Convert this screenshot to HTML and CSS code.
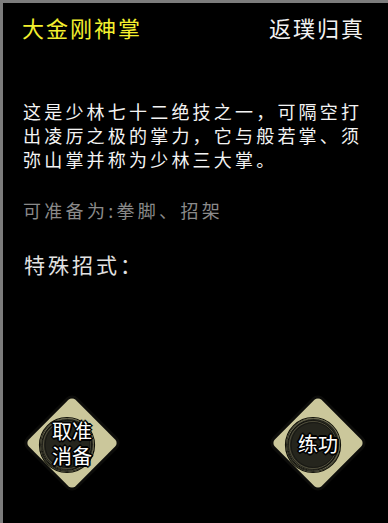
FILE: index.html
```html
<!DOCTYPE html>
<html lang="zh">
<head>
<meta charset="utf-8">
<link rel="stylesheet" href="styles.css">
</head>
<body>
<div class="panel">
  <header class="head">
    <div class="title">大金刚神掌</div>
    <div class="level">返璞归真</div>
  </header>
  <p class="desc">这是少林七十二绝技之一，可隔空打出凌厉之极的掌力，它与般若掌、须弥山掌并称为少林三大掌。</p>
  <p class="prep">可准备为:拳脚、招架</p>
  <p class="special">特殊招式：</p>
  <footer class="actions">
    <div class="btn">
      <div class="diamond"></div>
      <svg class="ring" width="60" height="60" viewBox="0 0 60 60">
        <circle cx="30" cy="30" r="27" fill="#25251d"/>
        <circle cx="30" cy="30" r="27.5" fill="none" stroke="#111109" stroke-width="1.2"/>
        <circle cx="30.5" cy="29.5" r="26" fill="none" stroke="#8d8a6a" stroke-width="0.7"/>
        <circle cx="29.5" cy="30.5" r="24.8" fill="none" stroke="#0f0f0a" stroke-width="0.9"/>
        <circle cx="30" cy="30" r="23.6" fill="none" stroke="#6e6b52" stroke-width="0.6"/>
        <circle cx="30.5" cy="30" r="22.4" fill="none" stroke="#141410" stroke-width="0.8"/>
      </svg>
      <div class="label two">取准<br>消备</div>
    </div>
    <div class="btn">
      <div class="diamond"></div>
      <svg class="ring" width="60" height="60" viewBox="0 0 60 60">
        <circle cx="30" cy="30" r="27" fill="#25251d"/>
        <circle cx="30" cy="30" r="27.5" fill="none" stroke="#111109" stroke-width="1.2"/>
        <circle cx="30.5" cy="29.5" r="26" fill="none" stroke="#8d8a6a" stroke-width="0.7"/>
        <circle cx="29.5" cy="30.5" r="24.8" fill="none" stroke="#0f0f0a" stroke-width="0.9"/>
        <circle cx="30" cy="30" r="23.6" fill="none" stroke="#6e6b52" stroke-width="0.6"/>
        <circle cx="30.5" cy="30" r="22.4" fill="none" stroke="#141410" stroke-width="0.8"/>
      </svg>
      <div class="label">练功</div>
    </div>
  </footer>
</div>
</body>
</html>
```
FILE: styles.css
```css
html, body {
  margin: 0;
  padding: 0;
  background: #000;
}
body {
  font-family: "Noto Sans CJK SC", "Noto Sans", sans-serif;
}
.panel {
  box-sizing: border-box;
  width: 388px;
  height: 523px;
  border-top: 3px solid #7c7c7c;
  border-left: 3px solid #7c7c7c;
  background: #000;
  display: flex;
  flex-direction: column;
}
.head {
  display: flex;
  justify-content: space-between;
  padding: 13px 23px 0 19px;
  font-size: 22px;
  line-height: 22px;
  letter-spacing: 2px;
}
.title {
  color: #f4f02e;
}
.level {
  color: #f2f2f2;
}
.desc {
  margin: 61px 0 0 20px;
  width: 345px;
  font-size: 18px;
  line-height: 24px;
  letter-spacing: 3.2px;
  color: #f4f4f4;
}
.prep {
  margin: 27px 0 0 20px;
  font-size: 18px;
  line-height: 24px;
  letter-spacing: 3.3px;
  color: #8a8a8a;
}
.special {
  margin: 30px 0 0 21px;
  font-size: 21px;
  line-height: 24px;
  letter-spacing: 3px;
  color: #e2e2e2;
}
.actions {
  margin-top: auto;
  display: flex;
  justify-content: space-between;
  padding: 0 23px 33px 22px;
}
.btn {
  width: 94px;
  height: 94px;
  display: grid;
  place-items: center;
}
.btn > * {
  grid-area: 1 / 1;
}
.diamond {
  width: 66px;
  height: 66px;
  background: #cbc79b;
  border-radius: 5px;
  transform: rotate(45deg);
  box-shadow: 0 0 0 3px #0c0c0a;
}
.ring {
  transform: translate(-5px, 2px);
}
.label {
  position: relative;
  color: #fff;
  font-size: 20px;
  line-height: 25px;
  text-align: center;
  text-shadow: 1px 1px 0 #000, -1px -1px 0 #000, 1px -1px 0 #000, -1px 1px 0 #000,
    2px 0 0 #000, -2px 0 0 #000, 0 2px 0 #000, 0 -2px 0 #000;
}
```
